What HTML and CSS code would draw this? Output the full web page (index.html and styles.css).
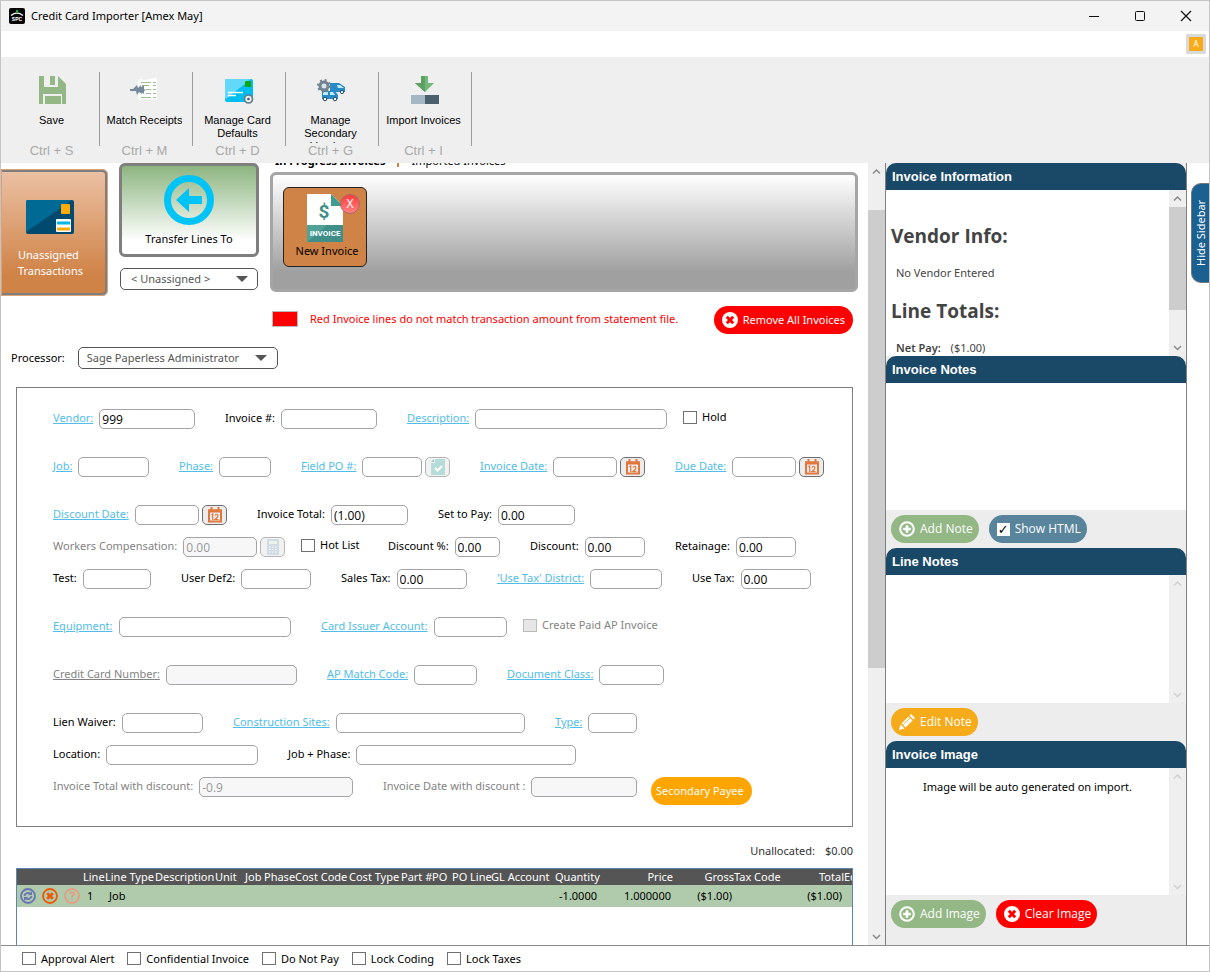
FILE: index.html
```html
<!DOCTYPE html>
<html lang="en">
<head>
<meta charset="utf-8">
<title>Credit Card Importer</title>
<link rel="stylesheet" href="styles.css">
</head>
<body>
<svg class="defs" width="0" height="0" aria-hidden="true">
  <symbol id="cal" viewBox="0 0 16 16"><path fill="none" stroke="#e0773d" stroke-width="2" d="M2 3.500h12v11H2z"/><path fill="#e0773d" d="M1 2.500h14v3H1z"/><path stroke="#e0773d" stroke-width="2" d="M4.500 0v4M11.500 0v4"/><path fill="none" stroke="#e0773d" stroke-width="1.200" d="M4.500 8l1.200-1v6M8 8.500q2-2.500 3 0 0 1.500-3 4h3.600"/></symbol>
  <symbol id="up" viewBox="0 0 17 17"><path fill="none" stroke="currentColor" stroke-width="1.500" d="M5 10.500l3.500-3.500 3.500 3.500"/></symbol>
  <symbol id="down" viewBox="0 0 17 17"><path fill="none" stroke="currentColor" stroke-width="1.500" d="M5 7l3.500 3.500L12 7"/></symbol>
  <symbol id="plus" viewBox="0 0 16 16"><circle cx="8" cy="8" r="6.800" fill="none" stroke="#fff" stroke-width="2"/><path stroke="#fff" stroke-width="2.600" d="M8 4.200v7.600M4.200 8h7.600"/></symbol>
  <symbol id="cross" viewBox="0 0 16 16"><circle cx="8" cy="8" r="8" fill="#fff"/><path stroke="#f00" stroke-width="3" d="M4.800 4.800l6.400 6.400M11.200 4.800l-6.400 6.400"/></symbol>
</svg>
<div class="window">
  <header class="titlebar">
    <svg class="logo" width="16" height="16" viewBox="0 0 16 16"><rect width="16" height="16" rx="2" fill="#050505"/><path d="M2 7.500Q8 2.500 14 7.500" fill="none" stroke="#eee" stroke-width="1.600"/><path d="M8 2v3" stroke="#1fa83a" stroke-width="2"/><text x="8" y="13" text-anchor="middle">SPC</text></svg>
    <h1>Credit Card Importer [Amex May]</h1>
    <div class="wincontrols">
      <button aria-label="Minimize"><svg width="12" height="12"><path d="M1 6.500h10" stroke="#111"/></svg></button>
      <button aria-label="Maximize"><svg width="12" height="12"><rect x="1.500" y="1.500" width="9" height="9" rx="1" fill="none" stroke="#111"/></svg></button>
      <button aria-label="Close"><svg width="12" height="12"><path d="M1 1l10 10M11 1L1 11" stroke="#111" stroke-width="1.200"/></svg></button>
    </div>
  </header>
  <div class="menubar"><button class="badge">A</button></div>
  <nav class="toolbar">
    <button class="tool"><svg width="32" height="32" viewBox="0 0 32 32"><path fill="#93b785" d="M3 2h19l8 8v20H3z"/><path fill="#efefef" d="M8 2h14v11H8zM7 20h19v10H7z"/><path fill="#93b785" d="M14 2h5v9h-5zM9 22h16v8H9z"/></svg><span class="name">Save</span><kbd>Ctrl + S</kbd></button>
    <button class="tool"><svg width="32" height="32" viewBox="0 0 32 32"><path fill="#fff" d="M9 6l3-1 3 1 13-2v21l-3 1-3-1-3 1-3-1-3 1-4-1z"/><path stroke="#9cc08f" fill="none" d="M12 8.500h10M13 11.500h7M17 15.500h5M17 19.500h5M12 23.500h10M24 8.500h3M24 11.500h3M24 15.500h3M24 19.500h3M24 23.500h3"/><path fill="#75899a" d="M1 15h3l4-4 1 3 3-3v3l5 2-4 2v2l-3-2-2 3-1-4H1zM11 14l4-3v9l-4-3z"/></svg><span class="name">Match Receipts</span><kbd>Ctrl + M</kbd></button>
    <button class="tool"><svg width="32" height="32" viewBox="0 0 32 32"><rect x="3" y="5" width="28" height="23" rx="2" fill="#00bff0"/><path fill="#62d8fa" d="M5 5h24L4 25q-1 0-1-2V7q0-2 2-2z"/><rect x="23" y="7" width="6" height="6" rx="1" fill="#0aa80c"/><path stroke="#fff" stroke-width="1.600" d="M6 18.500h15M6 21.500h8"/><circle cx="26.500" cy="25" r="4" fill="#e7eef1" stroke="#657b8b" stroke-width="1.700"/><circle cx="26.500" cy="25" r="1.300" fill="#506575"/></svg><span class="name">Manage Card<br>Defaults</span><kbd>Ctrl + D</kbd></button>
    <button class="tool"><svg width="32" height="32" viewBox="0 0 32 32"><path fill="#278bc8" d="M15 9h9l6 4v5H15zM7 17h13l3 4v4H7z"/><path fill="#c7ebfa" d="M22 11h3l4 3h-6zM15 18h3l2 3h-5zM8 18h5v3H8z"/><g fill="#fff" stroke="#244b63"><circle cx="27" cy="18" r="1.600"/><circle cx="10" cy="25" r="1.800"/><circle cx="20" cy="25" r="1.800"/></g><circle cx="9" cy="12" r="4" fill="#dce3e6" stroke="#708391" stroke-width="3"/><circle cx="9" cy="12" r="6" fill="none" stroke="#708391" stroke-width="2" stroke-dasharray="2 2.700"/></svg><span class="name">Manage<br>Secondary<br>Vendors</span><kbd>Ctrl + G</kbd></button>
    <button class="tool"><svg width="32" height="32" viewBox="0 0 32 32"><path fill="#72b87a" d="M13 2h7v7h6l-9 9L7 9h6z"/><path fill="#5aa162" d="M13 2h4v16L7 9h6z"/><path fill="#a3b8c4" d="M3 21h14v9H3z"/><path fill="#4a606c" d="M17 21h14v9H17z"/></svg><span class="name">Import Invoices</span><kbd>Ctrl + I</kbd></button>
  </nav>

  <div class="main">
    <main class="content">
      <section class="transfer">
        <button class="unassigned"><svg width="48" height="36" viewBox="0 0 48 36"><rect y="1" width="48" height="34" rx="2" fill="#004a70"/><path fill="#006a94" d="M2 1h44L0 33V3q0-2 2-2z"/><rect x="35" y="5" width="9" height="10" rx="1" fill="#ffab0a"/><rect x="30" y="20" width="15" height="13" rx="1" fill="#fff"/><path stroke="#00b5e8" stroke-width="3" d="M31 24h13"/><path stroke="#ffab0a" stroke-width="3" d="M31 30h13"/></svg><span>Unassigned<br>Transactions</span></button>
        <div class="transfer-to">
          <button class="transfer-btn"><svg width="50" height="50" viewBox="0 0 50 50"><circle cx="25" cy="25" r="21.500" fill="none" stroke="#00c3f7" stroke-width="7"/><path fill="#00c3f7" d="M12 25L25 13v8h13v8H25v8z"/></svg><span>Transfer Lines To</span></button>
          <div class="select small"><select aria-label="Transfer target"><option>&lt; Unassigned &gt;</option></select></div>
        </div>
        <div class="invoices">
          <div class="tabs"><a class="active" href="#progress">In Progress Invoices</a><i></i><a href="#imported">Imported Invoices</a></div>
          <div class="tray">
            <div class="invoice"><svg width="38" height="50" viewBox="0 0 38 50"><path fill="#fff" d="M1 1h24l12 12v36H1z"/><path fill="#3f9c90" d="M25 1l12 12H25z"/><path fill="#3f8f88" d="M1 32h36v17H1z"/><path fill="#50a299" d="M1 32h20L1 49z"/><text class="dollar" x="18" y="25" text-anchor="middle">$</text><text class="word" x="19" y="43" text-anchor="middle">INVOICE</text></svg><span>New Invoice</span><button class="remove" aria-label="Remove invoice">X</button></div>
          </div>
        </div>
      </section>
      <div class="legend"><i class="swatch"></i><span>Red Invoice lines do not match transaction amount from statement file.</span><button class="pill red"><svg width="16" height="16"><use href="#cross"/></svg>Remove All Invoices</button></div>
      <div class="processor"><label for="proc">Processor:</label><div class="select"><select id="proc"><option>Sage Paperless Administrator</option></select></div></div>

      <form class="form">
        <div class="row r1">
          <div class="field"><label for="f1"><a href="#vendor">Vendor:</a></label><input id="f1" value="999"></div>
          <div class="field"><label for="f2">Invoice #:</label><input id="f2"></div>
          <div class="field"><label for="f3"><a href="#description">Description:</a></label><input id="f3"></div>
          <label class="check"><input type="checkbox">Hold</label>
        </div>
        <div class="row r2 spaced">
          <div class="field"><label for="f4"><a href="#job">Job:</a></label><input id="f4"></div>
          <div class="field"><label for="f5"><a href="#phase">Phase:</a></label><input id="f5"></div>
          <div class="field"><label for="f6"><a href="#po">Field PO #:</a></label><input id="f6"><button type="button" class="mini" disabled aria-label="Check PO"><svg width="16" height="16" viewBox="0 0 16 16"><path fill="#b5dcd9" d="M5 0h10v16H1V4h4z"/><path fill="none" stroke="#fff" stroke-width="2" d="M5 9l2.500 2.500L12 7"/><path fill="#8fc4c0" d="M1 3l3-3v3z"/></svg></button></div>
          <div class="field"><label for="f7"><a href="#invdate">Invoice Date:</a></label><input id="f7"><button type="button" class="mini" aria-label="Pick invoice date"><svg width="16" height="16"><use href="#cal"/></svg></button></div>
          <div class="field"><label for="f8"><a href="#due">Due Date:</a></label><input id="f8"><button type="button" class="mini" aria-label="Pick due date"><svg width="16" height="16"><use href="#cal"/></svg></button></div>
        </div>
        <div class="row r3 spaced">
          <div class="field"><label for="f9"><a href="#discdate">Discount Date:</a></label><input id="f9"><button type="button" class="mini" aria-label="Pick discount date"><svg width="16" height="16"><use href="#cal"/></svg></button></div>
          <div class="field"><label for="f10">Invoice Total:</label><input id="f10" value="(1.00)"></div>
          <div class="field"><label for="f11">Set to Pay:</label><input id="f11" value="0.00"></div>
        </div>
        <div class="row r4">
          <div class="field off"><label for="f12">Workers Compensation:</label><input id="f12" value="0.00" disabled><button type="button" class="mini" disabled aria-label="Calculator"><svg width="16" height="16" viewBox="0 0 16 16"><rect x="2" width="12" height="16" rx="1" fill="#d0dce4"/><path fill="#eaf5ec" d="M4 2h8v3H4z"/><path stroke="#fff" stroke-dasharray="1.500 1.500" d="M4 8h8M4 10.500h8M4 13h8"/></svg></button></div>
          <label class="check"><input type="checkbox">Hot List</label>
          <div class="field"><label for="f13">Discount %:</label><input id="f13" value="0.00"></div>
          <div class="field"><label for="f14">Discount:</label><input id="f14" value="0.00"></div>
          <div class="field"><label for="f15">Retainage:</label><input id="f15" value="0.00"></div>
        </div>
        <div class="row r5">
          <div class="field"><label for="f16">Test:</label><input id="f16"></div>
          <div class="field"><label for="f17">User Def2:</label><input id="f17"></div>
          <div class="field"><label for="f18">Sales Tax:</label><input id="f18" value="0.00"></div>
          <div class="field"><label for="f19"><a href="#district">'Use Tax' District:</a></label><input id="f19"></div>
          <div class="field"><label for="f20">Use Tax:</label><input id="f20" value="0.00"></div>
        </div>
        <div class="row r6 spaced">
          <div class="field"><label for="f21"><a href="#equipment">Equipment:</a></label><input id="f21"></div>
          <div class="field"><label for="f22"><a href="#issuer">Card Issuer Account:</a></label><input id="f22"></div>
          <label class="check off"><input type="checkbox" disabled>Create Paid AP Invoice</label>
        </div>
        <div class="row r7 spaced">
          <div class="field off"><label for="f23"><a href="#number">Credit Card Number:</a></label><input id="f23" disabled></div>
          <div class="field"><label for="f24"><a href="#match">AP Match Code:</a></label><input id="f24"></div>
          <div class="field"><label for="f25"><a href="#class">Document Class:</a></label><input id="f25"></div>
        </div>
        <div class="row r8 spaced">
          <div class="field"><label for="f26">Lien Waiver:</label><input id="f26"></div>
          <div class="field"><label for="f27"><a href="#sites">Construction Sites:</a></label><input id="f27"></div>
          <div class="field"><label for="f28"><a href="#type">Type:</a></label><input id="f28"></div>
        </div>
        <div class="row r9">
          <div class="field"><label for="f29">Location:</label><input id="f29"></div>
          <div class="field"><label for="f30">Job + Phase:</label><input id="f30"></div>
        </div>
        <div class="row r10">
          <div class="field off"><label for="f31">Invoice Total with discount:</label><input id="f31" value="-0.9" disabled></div>
          <div class="field off"><label for="f32">Invoice Date with discount :</label><input id="f32" disabled></div>
          <button type="button" class="pill orange plain">Secondary Payee</button>
        </div>
      </form>

      <div class="unalloc"><span>Unallocated:</span><span>$0.00</span></div>
      <div class="lines">
        <table>
          <colgroup><col class="c-act"><col class="c-line"><col class="c-type"><col class="c-desc"><col class="c-unit"><col class="c-job"><col class="c-phase"><col class="c-code"><col class="c-ctype"><col class="c-part"><col class="c-po"><col class="c-poline"><col class="c-gl"><col class="c-qty"><col class="c-price"><col class="c-gross"><col class="c-tax"><col class="c-total"><col class="c-eq"></colgroup>
          <thead><tr><th></th><th>Line</th><th>Line Type</th><th>Description</th><th>Unit</th><th>Job</th><th>Phase</th><th>Cost Code</th><th>Cost Type</th><th>Part #</th><th>PO</th><th>PO Line</th><th>GL Account</th><th class="num">Quantity</th><th class="num">Price</th><th class="num">Gross</th><th>Tax Code</th><th class="num">Total</th><th>Equipment</th></tr></thead>
          <tbody><tr>
            <td><div class="actions">
              <button aria-label="Refresh line"><svg width="16" height="16" viewBox="0 0 16 16"><circle cx="8" cy="8" r="7" fill="none" stroke="#6b74b5" stroke-width="1.800"/><path fill="none" stroke="#6b74b5" stroke-width="1.800" d="M4.500 8a3.500 3.500 0 0 1 6-2M11.500 8a3.500 3.500 0 0 1-6 2"/><path fill="#6b74b5" d="M8 7h4V3zM8 9H4v4z"/></svg></button>
              <button aria-label="Delete line"><svg width="16" height="16" viewBox="0 0 16 16"><circle cx="8" cy="8" r="7" fill="none" stroke="#e95b08" stroke-width="1.800"/><path stroke="#e95b08" stroke-width="2.800" d="M5.200 5.200l5.600 5.600M10.800 5.200l-5.600 5.600"/></svg></button>
              <button aria-label="Line help"><svg width="16" height="16" viewBox="0 0 16 16"><circle cx="8" cy="8" r="7" fill="none" stroke="#f0967a" stroke-width="1.600"/><path fill="none" stroke="#f0967a" stroke-width="1.600" d="M5.800 6.200q.2-2 2.200-2 2.300 0 2.200 1.800Q10 7.200 8 8.200v1.300M8 10.700v1.600"/></svg></button></div></td>
            <td class="lineno">1</td><td class="job">Job</td><td></td><td></td><td></td><td></td><td></td><td></td><td></td><td></td><td></td><td></td><td class="num">-1.0000</td><td class="num">1.000000</td><td class="num">($1.00)</td><td></td><td class="num">($1.00)</td><td></td>
          </tr></tbody>
        </table>
      </div>
    </main>
    <div class="scroll page"><svg width="17" height="17"><use href="#up"/></svg><i></i><svg width="17" height="17"><use href="#down"/></svg></div>

    <aside class="sidebar">
      <h2>Invoice Information</h2>
      <div class="pane info">
        <div class="text"><h3>Vendor Info:</h3><p>No Vendor Entered</p><h3>Line Totals:</h3><p><b>Net Pay:</b> ($1.00)</p></div>
        <div class="scroll thumb"><svg width="17" height="17"><use href="#up"/></svg><i></i><svg width="17" height="17"><use href="#down"/></svg></div>
      </div>
      <h2>Invoice Notes</h2>
      <div class="pane"></div>
      <div class="actionsbar"><button class="pill green"><svg width="16" height="16"><use href="#plus"/></svg>Add Note</button><label class="pill blue"><input type="checkbox" checked>Show HTML</label></div>
      <h2>Line Notes</h2>
      <div class="pane grow"><div class="text"></div><div class="scroll dim"><svg width="17" height="17"><use href="#up"/></svg><svg width="17" height="17"><use href="#down"/></svg></div></div>
      <div class="actionsbar"><button class="pill amber"><svg width="16" height="16" viewBox="0 0 16 16"><path fill="#fff" d="M0 16l1.500-5.500 4 4zM2.500 9.500l7-7 4 4-7 7zM10.500 1.500l1.500-1.500 4 4-1.500 1.500z"/><path stroke="#f6ab1a" stroke-width=".8" d="M4 11l7-7"/></svg>Edit Note</button></div>
      <h2>Invoice Image</h2>
      <div class="pane"><div class="text center">Image will be auto generated on import.</div><div class="scroll dim"><svg width="17" height="17"><use href="#up"/></svg><svg width="17" height="17"><use href="#down"/></svg></div></div>
      <div class="actionsbar last"><button class="pill green"><svg width="16" height="16"><use href="#plus"/></svg>Add Image</button><button class="pill red"><svg width="16" height="16"><use href="#cross"/></svg>Clear Image</button></div>
    </aside>
    <div class="edge"><button class="hide">Hide Sidebar</button></div>
  </div>

  <footer class="options">
    <label class="check"><input type="checkbox">Approval Alert</label>
    <label class="check"><input type="checkbox">Confidential Invoice</label>
    <label class="check"><input type="checkbox">Do Not Pay</label>
    <label class="check"><input type="checkbox">Lock Coding</label>
    <label class="check"><input type="checkbox">Lock Taxes</label>
  </footer>
</div>
</body>
</html>
```

FILE: styles.css
```css
* { box-sizing: border-box; }
body { margin: 0; font: 11px/16px "Noto Sans", "Open Sans", sans-serif; color: #000; background: #fff; }
button, input, select { font: inherit; color: inherit; margin: 0; padding: 0; border: 0; background: none; }
h1, h2, h3, p { margin: 0; }
svg { display: block; flex: none; }
a { color: inherit; text-decoration: none; }
.defs { position: absolute; }

.window { display: flex; flex-direction: column; min-height: 100vh; border: 1px solid #c4c4c4; }
.titlebar { display: flex; align-items: center; height: 30px; padding-left: 8px; gap: 6px; background: #f3f3f3; }
.titlebar h1 { flex: 1; font-size: 11px; font-weight: 400; }
.logo text { fill: #fff; font: bold 5px "Liberation Sans", sans-serif; }
.wincontrols { display: flex; }
.wincontrols button { display: grid; place-items: center; width: 46px; height: 30px; }
.menubar { display: flex; justify-content: flex-end; align-items: center; height: 26px; padding-right: 3px; }
.badge { width: 20px; height: 20px; border: 3px solid #dadada; background: #f9aa1b; color: #fff; font-size: 8px; line-height: 14px; }

.toolbar { display: flex; height: 106px; padding-left: 4px; background: #efefef; font-family: "Liberation Sans", Arial, sans-serif; }
.tool { display: flex; flex-direction: column; align-items: center; width: 93px; padding-top: 17px; position: relative; }
.tool::after { content: ""; position: absolute; right: -2px; top: 15px; height: 74px; width: 1px; background: #9d9d9d; }
.tool .name { height: 29px; margin-top: 8px; overflow: hidden; line-height: 13px; }
.tool kbd { font: 13px/16px "Liberation Sans", Arial, sans-serif; color: #a9a9a9; }

.main { display: flex; flex: 1; min-height: 0; }
.content { flex: 1; min-width: 0; display: flex; flex-direction: column; padding-right: 15px; overflow: hidden; }
.transfer { display: flex; align-items: flex-start; }
.unassigned { display: flex; flex-direction: column; align-items: center; justify-content: center; gap: 12px; width: 107px; height: 127px; margin: 6px 11px 0 0; padding: 12px 5px 0 0; border: 3px solid #7f7f7f; border-left: 0; border-radius: 0 6px 6px 0; outline: 1px solid #dda176; outline-offset: -1px; background: linear-gradient(#ebc0a3, #d08347 85%); color: #fff; text-align: left; }
.unassigned svg { margin-right: 2px; }
.transfer-to { width: 140px; display: flex; flex-direction: column; gap: 11px; }
.transfer-btn { display: flex; flex-direction: column; align-items: center; justify-content: center; gap: 6px; height: 94px; padding-top: 2px; border: 3px solid #7f7f7f; border-radius: 6px; background: linear-gradient(#8db580, #fff 85%); }
.select { position: relative; }
.select select { appearance: none; display: block; width: 200px; height: 22px; padding-left: 8px; border: 1px solid #555; border-radius: 5px; background: #fff; color: #555; }
.select::after { content: ""; position: absolute; right: 11px; top: 8px; border: 6px solid transparent; border-top-color: #555; border-bottom: 0; }
.small select { width: 138px; margin-left: 1px; padding-left: 10px; }
.invoices { flex: 1; margin: 0 -5px 0 11px; }
.tabs { display: flex; align-items: flex-end; gap: 12px; height: 6px; margin: 0 0 3px 5px; overflow: hidden; }
.tabs .active { font-weight: 700; }
.tabs i { width: 2px; height: 16px; margin-bottom: 2px; background: #d08347; }
.tray { height: 120px; padding: 12px 10px; border: 3px solid #a5a5a5; border-radius: 6px; background: linear-gradient(#fff, #a0a0a0 85%); }
.invoice { position: relative; display: flex; flex-direction: column; align-items: center; width: 84px; height: 80px; padding-top: 5px; border: 1px solid #222; border-radius: 6px; background: #d08347; }
.invoice span { margin-left: 4px; white-space: nowrap; }
.invoice .dollar { font: bold 19px Roboto, sans-serif; fill: #3f8f88; }
.invoice .word { font: bold 8px Roboto, sans-serif; fill: #fff; }
.remove { position: absolute; right: 6px; top: 6px; width: 20px; height: 20px; border: 1px solid #a66; border-radius: 50%; background: linear-gradient(#ff3c3c, #ff8080); color: #fff; font-size: 12px; line-height: 18px; }

.legend { display: flex; align-items: center; margin-top: 10px; padding-left: 271px; color: #f00; }
.legend span { flex: 1; margin-top: -3px; white-space: nowrap; }
.swatch { width: 26px; height: 16px; margin: -3px 12px 0 0; border: 1px solid #bbb; background: #f00; }
.pill { display: flex; align-items: center; gap: 5px; height: 28px; padding: 0 6px 0 8px; border-radius: 14px; color: #fff; white-space: nowrap; }
.legend .pill { padding: 0 8px; }
.red { background: #f00; }
.green { background: #93b785; }
.blue { background: #58849c; }
.amber { background: #f6ab1a; }
.orange { background: #ffa500; }
.pill.plain { padding: 0 8px 0 5px; }
.processor { display: flex; align-items: center; gap: 13px; margin: 13px 0 18px 10px; }

.form { margin-left: 15px; padding: 21px 0 21px 36px; border: 1px solid #7f7f7f; }
.row { display: grid; column-gap: 30px; margin-top: 12px; align-items: start; }
.row:first-child { margin-top: 0; }
.row.spaced { margin-top: 28px; }
.r1 { grid-template-columns: 142px 152px 260px auto; }
.r2 { grid-template-columns: 96px 92px 149px 165px 149px; }
.r3 { grid-template-columns: 174px 151px 137px; }
.r4 { grid-template-columns: 232px 43px 112px 115px 121px; }
.r5 { grid-template-columns: 98px 130px 126px 165px 119px; }
.r6 { grid-template-columns: 238px 186px auto; }
.r7 { grid-template-columns: 244px 150px 157px; }
.r8 { grid-template-columns: 150px 292px 82px; }
.r9 { grid-template-columns: 205px 288px; }
.r10 { grid-template-columns: 300px 254px 102px; height: 28px; }
.r10 .pill { margin-left: -16px; justify-self: start; }
.field { display: flex; align-items: flex-start; }
.field label { margin-right: 6px; line-height: 18px; white-space: nowrap; }
.field a { color: #52bde8; text-decoration: underline; }
.field input { flex: 1; min-width: 0; height: 20px; padding: 0 2px; border: 1px solid #a4a4a8; border-radius: 5px; background: #fff; font: 12px/16px "Open Sans", sans-serif; }
.field input:disabled { background: #f7f7f7; color: #999; }
.off, .field.off a { color: #838383; }
.mini { display: grid; place-items: center; width: 25px; height: 20px; margin-left: 3px; border: 1px solid #707070; border-radius: 5px; background: #ececec; }
.mini:disabled { border-color: #b5b5b5; background: #f2f2f2; }
.check { display: flex; align-items: center; gap: 5px; line-height: 16px; white-space: nowrap; }
.row .check { margin-left: -14px; }
.check input { appearance: none; flex: none; width: 14px; height: 13px; border: 1px solid #707070; background: #fff; }
.check input:disabled { border-color: #bbb; background: #e6e6e6; }

.unalloc { display: flex; justify-content: flex-end; gap: 10px; margin: 16px 0 9px; color: #333; }
.lines { flex: 1; margin-left: 15px; border: 1px solid #5d86ae; border-bottom: 0; overflow: hidden; }
.lines table { width: 900px; border-collapse: collapse; table-layout: fixed; }
.lines th, .lines td { padding: 0; font-weight: 400; text-align: left; white-space: nowrap; }
.lines th { height: 16px; color: #fff; background: #555; }
.lines td { height: 22px; background: #b0cbab; }
.lines .num { text-align: right; }
.lines td.num { padding-right: 2px; }
.lines .lineno, .lines .job { padding-left: 4px; }
.actions { display: flex; gap: 6px; padding-left: 3px; }
.c-act { width: 66px; }
.c-line { width: 22px; }
.c-type { width: 50px; }
.c-desc { width: 60px; }
.c-unit { width: 30px; }
.c-job { width: 19px; }
.c-phase { width: 31px; }
.c-code { width: 54px; }
.c-ctype { width: 52px; }
.c-part { width: 31px; }
.c-po { width: 20px; }
.c-poline { width: 39px; }
.c-gl { width: 64px; }
.c-qty { width: 44px; }
.c-price { width: 74px; }
.c-gross { width: 61px; }
.c-tax { width: 49px; }
.c-total { width: 61px; }
.c-eq { width: 73px; }

.scroll { display: flex; flex-direction: column; justify-content: space-between; flex: none; width: 17px; background: #efefef; color: #8a8a8a; }
.scroll i { background: #cdcdcd; }
.page i { height: 458px; margin: 30px 0 auto; }
.thumb i { height: 103px; margin-bottom: auto; }
.dim { color: #d0d0d0; }

.sidebar { display: flex; flex-direction: column; width: 302px; border: solid #7f7f7f; border-width: 0 1px; background: #ededed; }
.sidebar h2 { height: 27px; padding-left: 6px; border-radius: 10px 10px 0 0; background: #1a4867; color: #fff; font: bold 13px/27px "Liberation Sans", Arial, sans-serif; }
.sidebar .pill { font-size: 12px; font-family: "Open Sans", sans-serif; }
.pane { display: flex; flex: 0 0 127px; background: #fff; }
.pane.info { flex-basis: 166px; }
.pane.grow { flex-grow: 1; }
.text { flex: 1; padding: 0 5px; }
.info .text { height: 166px; padding-top: 32px; overflow: hidden; color: #444; }
.info h3 { font: 700 19px/28px "Open Sans", sans-serif; }
.info p { margin: 15px 5px 16px; }
.info b { margin-right: 7px; font-weight: 600; }
.pane .center { padding-top: 11px; text-align: center; }
.actionsbar { display: flex; align-items: flex-start; gap: 10px; height: 38px; padding: 5px; }
.actionsbar.last { height: 50px; }
.blue input { appearance: none; width: 13px; height: 13px; background: #fff; display: grid; place-items: center; }
.blue input::before { content: "✓"; color: #000; font: bold 13px/13px "DejaVu Sans", sans-serif; }
.edge { width: 22px; padding: 20px 0 0 4px; }
.hide { width: 18px; height: 100px; border: 1px solid #777; border-left: 0; border-radius: 0 10px 10px 0; background: #1a6091; color: #fff; writing-mode: vertical-rl; transform: rotate(180deg); }

.options { display: flex; align-items: center; gap: 13px; height: 26px; padding-left: 21px; border-top: 1px solid #8c8c8c; }
```
